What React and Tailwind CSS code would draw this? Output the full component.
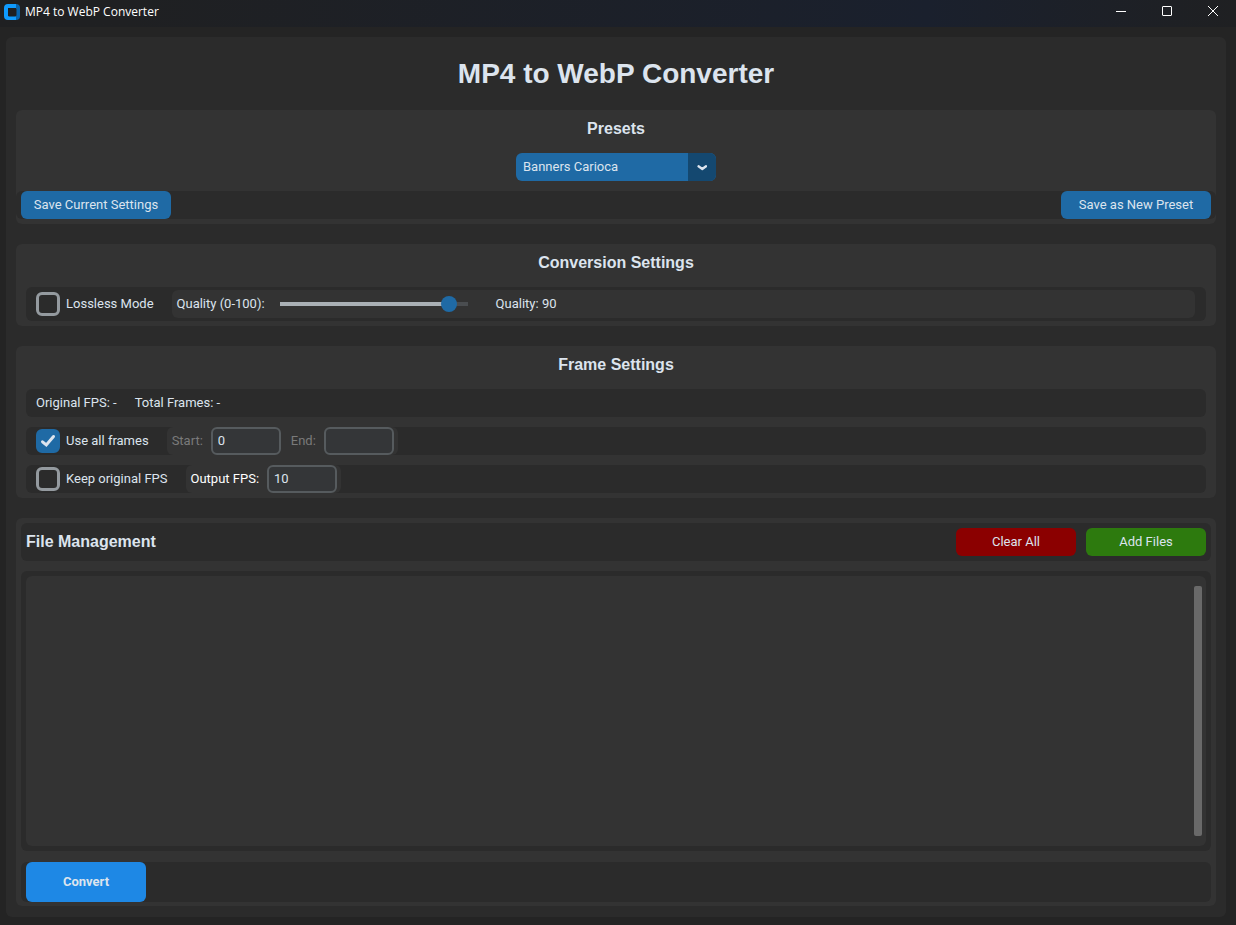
import { useState } from "react";

const heading = "text-center font-[Liberation_Sans,sans-serif] text-base leading-6 font-bold text-[#dce4ee]";
const card = "rounded-md bg-[#333333]";
const strip = "rounded-md bg-[#2b2b2b]";
const blueButton =
  "h-7 w-[150px] rounded-md bg-[#1f6aa5] text-[#dce4ee] hover:bg-[#144870]";

function CheckOption({ label, checked, onChange }) {
  return (
    <label className="flex items-center gap-1.5">
      <span className="relative flex size-6">
        <input
          type="checkbox"
          checked={checked}
          onChange={(e) => onChange(e.target.checked)}
          className="size-6 appearance-none rounded-md border-3 border-[#949a9f] checked:border-[#1f6aa5] checked:bg-[#1f6aa5]"
        />
        {checked && (
          <svg viewBox="0 0 24 24" className="pointer-events-none absolute inset-0 size-6" fill="none" stroke="#dce4ee" strokeWidth="3" strokeLinecap="round">
            <path d="M6.5 12.8L10.3 16L17.5 7.5" />
          </svg>
        )}
      </span>
      {label}
    </label>
  );
}

function Field({ id, label, value, onChange, labelClass }) {
  return (
    <div className="flex items-center gap-2">
      <label htmlFor={id} className={labelClass}>
        {label}
      </label>
      <input
        id={id}
        type="text"
        value={value}
        onChange={(e) => onChange(e.target.value)}
        className="h-7 w-[70px] rounded-md border-2 border-[#565b5e] bg-[#343638] px-[5px] pb-0.5 text-[#dce4ee] outline-none"
      />
    </div>
  );
}

function TitleBar() {
  return (
    <header className="flex h-[27px] items-center justify-between bg-linear-to-r from-[#1f2022] from-10% via-[#1a202d] via-75% to-[#1f2022] pl-1">
      <div className="flex h-6 items-center gap-[5px] self-start">
        <svg viewBox="0 0 16 16" className="size-4" aria-hidden="true">
          <path d="M4 0H12V4H4V12H12V16H4A4 4 0 0 1 0 12V4A4 4 0 0 1 4 0Z" fill="#0f9bff" />
          <path d="M12 0A4 4 0 0 1 16 4V12A4 4 0 0 1 12 16V12V4Z" fill="#0864ae" />
          <rect x="4" y="4" width="8.5" height="8.5" rx="1.5" fill="#1f2022" />
        </svg>
        <span className="font-[Open_Sans,sans-serif] text-xs text-white">MP4 to WebP Converter</span>
      </div>
      <div className="flex self-start text-white">
        <button aria-label="Minimize" className="flex h-[22px] w-[46px] items-center justify-center">
          <svg viewBox="0 0 10 10" className="size-2.5" stroke="currentColor" shapeRendering="crispEdges">
            <path d="M0 5.5H10" />
          </svg>
        </button>
        <button aria-label="Maximize" className="flex h-[22px] w-[46px] items-center justify-center">
          <svg viewBox="0 0 10 10" className="size-2.5" fill="none" stroke="currentColor">
            <rect x="0.5" y="0.5" width="9" height="9" rx="0.5" />
          </svg>
        </button>
        <button aria-label="Close" className="flex h-[22px] w-[46px] items-center justify-center">
          <svg viewBox="0 0 10 10" className="size-2.5" stroke="currentColor">
            <path d="M0 0L10 10M10 0L0 10" />
          </svg>
        </button>
      </div>
    </header>
  );
}

export default function App() {
  const [preset, setPreset] = useState("Banners Carioca");
  const [lossless, setLossless] = useState(false);
  const [quality, setQuality] = useState(90);
  const [allFrames, setAllFrames] = useState(true);
  const [keepFps, setKeepFps] = useState(false);
  const [start, setStart] = useState("0");
  const [end, setEnd] = useState("");
  const [fps, setFps] = useState("10");
  const rangeLabel = allFrames ? "text-[#7a7a7a]" : "text-[#dce4ee]";

  return (
    <div className="flex min-h-screen flex-col bg-[#242424] font-[Roboto,sans-serif] text-[13px] leading-5 text-[#dce4ee]">
      <TitleBar />
      <main className="mt-2.5 mr-2.5 mb-2 ml-1.5 flex flex-1 flex-col gap-5 rounded-md bg-[#2b2b2b] px-2.5 pb-[11px]">
        <h1 className="-mb-5 py-5 text-center font-[Liberation_Sans,sans-serif] text-[28px] leading-[33px] font-bold">
          MP4 to WebP Converter
        </h1>

        <section className={`${card} flex flex-col items-center pt-[7px] pb-[5px]`}>
          <h2 className={heading}>Presets</h2>
          <div className="relative mt-3 h-7 w-[200px]">
            <select
              aria-label="Preset"
              value={preset}
              onChange={(e) => setPreset(e.target.value)}
              className="h-7 w-full appearance-none rounded-md bg-[#1f6aa5] px-[7px] text-[#dce4ee] outline-none"
            >
              <option>Banners Carioca</option>
            </select>
            <span className="pointer-events-none absolute inset-y-0 right-0 flex w-7 items-center justify-center rounded-r-md bg-[#144870]">
              <svg viewBox="0 0 10 6" className="mt-0.5 h-1.5 w-2.5" fill="none" stroke="#dce4ee" strokeWidth="2.3" strokeLinecap="round" strokeLinejoin="round">
                <path d="M1.5 1.3L5.3 4L9 1.3" />
              </svg>
            </span>
          </div>
          <div className={`${strip} mt-2.5 flex w-full justify-between px-[5px]`}>
            <button className={blueButton}>Save Current Settings</button>
            <button className={blueButton}>Save as New Preset</button>
          </div>
        </section>

        <section className={`${card} px-2.5 pt-[7px] pb-[5px]`}>
          <h2 className={heading}>Conversion Settings</h2>
          <div className={`${strip} mt-3 flex h-[34px] items-center gap-[18px] pr-[11px] pl-2.5`}>
            <CheckOption label="Lossless Mode" checked={lossless} onChange={setLossless} />
            <div className="flex h-7 flex-1 items-center rounded-md bg-[#333333] px-[5px]">
              <label htmlFor="quality">Quality (0-100):</label>
              <input
                id="quality"
                type="range"
                min="0"
                max="100"
                value={quality}
                onChange={(e) => setQuality(Number(e.target.value))}
                style={{ "--fill": `${quality}%` }}
                className="ml-[7px] h-4 w-[204px] appearance-none bg-transparent [&::-webkit-slider-runnable-track]:h-4 [&::-webkit-slider-runnable-track]:bg-[linear-gradient(to_right,#aab0b5_var(--fill),#4a4d50_var(--fill))] [&::-webkit-slider-runnable-track]:bg-[length:188px_4px] [&::-webkit-slider-runnable-track]:bg-center [&::-webkit-slider-runnable-track]:bg-no-repeat [&::-webkit-slider-thumb]:size-4 [&::-webkit-slider-thumb]:appearance-none [&::-webkit-slider-thumb]:rounded-full [&::-webkit-slider-thumb]:bg-[#1f6aa5]"
              />
              <output htmlFor="quality" className="ml-5">Quality: {quality}</output>
            </div>
          </div>
        </section>

        <section className={`${card} px-2.5 pt-[7px] pb-[5px]`}>
          <h2 className={heading}>Frame Settings</h2>
          <div className="mt-3 flex flex-col gap-2.5">
            <div className={`${strip} flex h-7 items-center gap-[18px] px-2.5`}>
              <span>Original FPS: -</span>
              <span>Total Frames: -</span>
            </div>
            <div className={`${strip} flex h-7 items-center gap-[18px] px-2.5`}>
              <CheckOption label="Use all frames" checked={allFrames} onChange={setAllFrames} />
              <div className="flex items-center gap-2.5 rounded-md bg-[#333333] pr-1 pl-[5px]">
                <Field id="start" label="Start:" value={start} onChange={setStart} labelClass={rangeLabel} />
                <Field id="end" label="End:" value={end} onChange={setEnd} labelClass={rangeLabel} />
              </div>
            </div>
            <div className={`${strip} flex h-7 items-center gap-[18px] px-2.5`}>
              <CheckOption label="Keep original FPS" checked={keepFps} onChange={setKeepFps} />
              <div className="flex items-center rounded-md bg-[#333333] pr-1 pl-[5px]">
                <Field id="fps" label="Output FPS:" value={fps} onChange={setFps} labelClass="text-white" />
              </div>
            </div>
          </div>
        </section>

        <section className={`${card} flex flex-1 flex-col px-[5px] pt-[5px] pb-1`}>
          <div className={`${strip} flex items-center gap-2.5 p-[5px]`}>
            <h2 className={`${heading} mr-auto`}>File Management</h2>
            <button className="h-7 w-[120px] rounded-md bg-[#8b0000]">Clear All</button>
            <button className="h-7 w-[120px] rounded-md bg-[#2d7a0e]">Add Files</button>
          </div>
          <div className={`${strip} mt-2.5 flex min-h-40 flex-1 p-[5px]`}>
            <div className="flex flex-1 justify-end rounded-md bg-[#333333] py-2.5 pr-1">
              <div className="w-2 rounded-xs bg-[#696969]" />
            </div>
          </div>
          <div className={`${strip} mt-[11px] px-[5px]`}>
            <button className="block h-10 w-[120px] rounded-md bg-[#1e88e5] font-bold">Convert</button>
          </div>
        </section>
      </main>
    </div>
  );
}
